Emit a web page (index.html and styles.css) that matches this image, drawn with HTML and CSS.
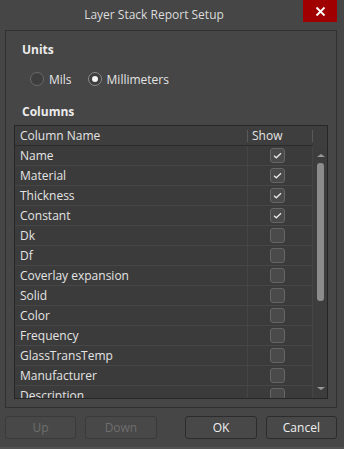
FILE: index.html
```html
<!DOCTYPE html>
<html>
<head>
<meta charset="utf-8">
<link rel="stylesheet" href="styles.css">
</head>
<body>
<div class="window">
  <div class="titlebar">
    <div class="title">Layer Stack Report Setup</div>
    <div class="close">
      <svg width="11" height="11" viewBox="0 0 11 11"><path d="M1.5 1.5 L9.5 9.5 M9.5 1.5 L1.5 9.5" stroke="#fff" stroke-width="1.8" fill="none"/></svg>
    </div>
  </div>
  <div class="group">
    <div class="label">Units</div>
    <div class="radios">
      <div class="radio"><span class="circle"></span><span>Mils</span></div>
      <div class="radio"><span class="circle on"></span><span>Millimeters</span></div>
    </div>
    <div class="label cols">Columns</div>
    <div class="table">
      <div class="thead">
        <div class="th name">Column Name</div>
        <div class="th show">Show</div>
        <div class="th sb"></div>
      </div>
      <div class="tbody">
        <div class="rows">
          <div class="row"><div class="cell name">Name</div><div class="cell show"><span class="cb"><svg width="9" height="7" viewBox="0 0 9 7"><path d="M1 3.8 L3.3 5.8 L8 1.3" stroke="#e8e8e8" stroke-width="1.3" fill="none"/></svg></span></div></div>
          <div class="row"><div class="cell name">Material</div><div class="cell show"><span class="cb"><svg width="9" height="7" viewBox="0 0 9 7"><path d="M1 3.8 L3.3 5.8 L8 1.3" stroke="#e8e8e8" stroke-width="1.3" fill="none"/></svg></span></div></div>
          <div class="row"><div class="cell name">Thickness</div><div class="cell show"><span class="cb"><svg width="9" height="7" viewBox="0 0 9 7"><path d="M1 3.8 L3.3 5.8 L8 1.3" stroke="#e8e8e8" stroke-width="1.3" fill="none"/></svg></span></div></div>
          <div class="row"><div class="cell name">Constant</div><div class="cell show"><span class="cb"><svg width="9" height="7" viewBox="0 0 9 7"><path d="M1 3.8 L3.3 5.8 L8 1.3" stroke="#e8e8e8" stroke-width="1.3" fill="none"/></svg></span></div></div>
          <div class="row"><div class="cell name">Dk</div><div class="cell show"><span class="cb"></span></div></div>
          <div class="row"><div class="cell name">Df</div><div class="cell show"><span class="cb"></span></div></div>
          <div class="row"><div class="cell name">Coverlay expansion</div><div class="cell show"><span class="cb"></span></div></div>
          <div class="row"><div class="cell name">Solid</div><div class="cell show"><span class="cb"></span></div></div>
          <div class="row"><div class="cell name">Color</div><div class="cell show"><span class="cb"></span></div></div>
          <div class="row"><div class="cell name">Frequency</div><div class="cell show"><span class="cb"></span></div></div>
          <div class="row"><div class="cell name">GlassTransTemp</div><div class="cell show"><span class="cb"></span></div></div>
          <div class="row"><div class="cell name">Manufacturer</div><div class="cell show"><span class="cb"></span></div></div>
          <div class="row"><div class="cell name">Description</div><div class="cell show"><span class="cb"></span></div></div>
        </div>
        <div class="scrollbar">
          <span class="arrow up"></span>
          <span class="thumb"></span>
          <span class="spacer"></span>
          <span class="arrow down"></span>
        </div>
      </div>
    </div>
  </div>
  <div class="buttons">
    <div class="btn disabled">Up</div>
    <div class="btn disabled">Down</div>
    <div class="gap"></div>
    <div class="btn">OK</div>
    <div class="btn">Cancel</div>
  </div>
</div>
</body>
</html>
```

FILE: styles.css
```css
* { box-sizing: border-box; }
html, body { margin: 0; padding: 0; background: #464646; }
body {
  width: 344px;
  height: 449px;
  overflow: hidden;
  font-family: "Open Sans", "Noto Sans", sans-serif;
  font-size: 12px;
  color: #e4e4e4;
}
.window {
  width: 344px;
  height: 449px;
  display: flex;
  flex-direction: column;
  border-bottom: 2px solid #525252;
}
.titlebar {
  height: 30px;
  display: flex;
  align-items: flex-start;
}
.title {
  flex: 1;
  text-align: center;
  padding-left: 5px;
  line-height: 30px;
  color: #dcdcdc;
  font-size: 12px;
}
.close {
  width: 34px;
  height: 22px;
  margin-right: 7px;
  background: #a10000;
  display: flex;
  align-items: center;
  justify-content: center;
}
.group {
  margin: 0 7px 0 5px;
  height: 378px;
  border: 1px solid #303030;
  padding: 11px 8px 0 8px;
  display: flex;
  flex-direction: column;
}
.label {
  font-weight: bold;
  line-height: 16px;
  padding-left: 8px;
  color: #ececec;
}
.radios {
  margin-top: 13px;
  height: 16px;
  display: flex;
  align-items: center;
  padding-left: 16px;
}
.radio {
  display: flex;
  align-items: center;
  margin-right: 16px;
}
.circle {
  width: 14px;
  height: 14px;
  border-radius: 50%;
  border: 1px solid #6a6a6a;
  background: #3e3e3e;
  margin-right: 5px;
  display: flex;
  align-items: center;
  justify-content: center;
}
.circle.on { border-color: #8a8a8a; }
.circle.on::after {
  content: "";
  width: 6px;
  height: 6px;
  border-radius: 50%;
  background: #f4f4f4;
}
.label.cols { margin-top: 17px; }
.table {
  margin-top: 5px;
  height: 274px;
  border: 1px solid #262626;
  background: #3b3b3b;
  display: flex;
  flex-direction: column;
  overflow: hidden;
}
.thead {
  display: flex;
  height: 20px;
  background: #3e3e3e;
  flex: none;
}
.th {
  height: 20px;
  line-height: 19px;
  border-bottom: 1px solid #2a2a2a;
  position: relative;
}
.th.name { width: 233px; padding-left: 5px; }
.th.show { width: 65px; padding-left: 4px; }
.th.sb { flex: 1; border-bottom: none; }
.th.name::after, .th.show::after {
  content: "";
  position: absolute;
  right: 0;
  top: 4px;
  height: 12px;
  width: 1px;
  background: #5a5a5a;
}
.tbody {
  flex: 1;
  display: flex;
  min-height: 0;
}
.rows {
  width: 298px;
  display: flex;
  flex-direction: column;
  overflow: hidden;
}
.row {
  display: flex;
  height: 20px;
  flex: none;
  border-bottom: 1px solid #464646;
}
.cell { height: 19px; line-height: 19px; }
.cell.name { width: 233px; padding-left: 5px; border-right: 1px solid #454545; }
.cell.show { width: 65px; padding-left: 22px; display: flex; align-items: center; border-right: 1px solid #454545; }
.cb {
  width: 15px;
  height: 15px;
  border: 1px solid #656565;
  border-radius: 3px;
  background: #4a4a4a;
  display: flex;
  align-items: center;
  justify-content: center;
}
.scrollbar {
  flex: 1;
  background: #3d3d3d;
  display: flex;
  flex-direction: column;
  align-items: center;
  padding: 8px 0 8px 1px;
}
.arrow {
  width: 0;
  height: 0;
  border-left: 4px solid transparent;
  border-right: 4px solid transparent;
}
.arrow.up { border-bottom: 3px solid #9a9a9a; }
.arrow.down { border-top: 3px solid #9a9a9a; }
.thumb {
  margin-top: 6px;
  width: 7px;
  height: 138px;
  border-radius: 3px;
  background: #8c8c8c;
}
.spacer { flex: 1; }
.buttons {
  margin-top: 8px;
  padding: 0 7px 0 5px;
  display: flex;
  gap: 9px;
}
.gap { width: 11px; }
.btn {
  width: 72px;
  height: 23px;
  border: 1px solid #2c2c2c;
  border-radius: 3px;
  background: #484848;
  text-align: center;
  line-height: 21px;
  color: #f0f0f0;
}
.btn.disabled { color: #6e6e6e; border-color: #3a3a3a; }
```
